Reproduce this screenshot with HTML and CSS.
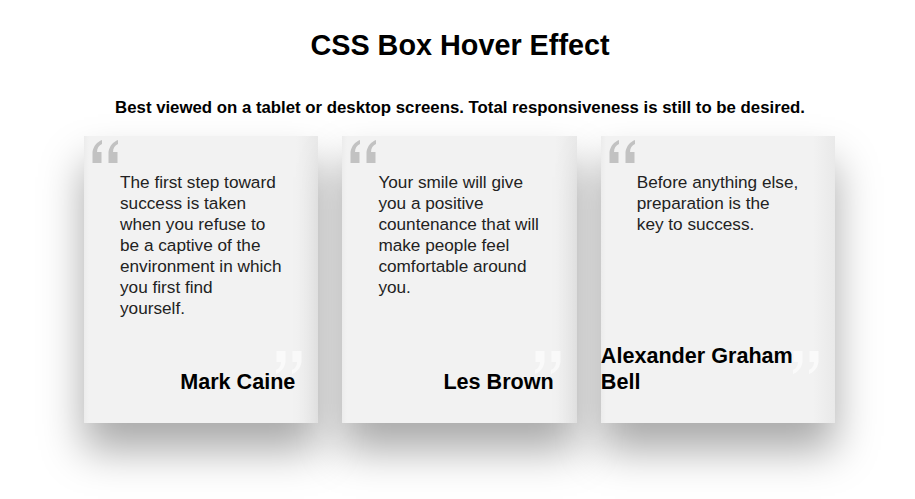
FILE: index.html
```html
<!DOCTYPE html>
<html lang="en">
<head>
<meta charset="utf-8">
<title>CSS Box Hover Effect</title>
<link rel="stylesheet" href="styles.css">
</head>
<body>
  <header class="page-head">
    <h1 class="title">CSS Box Hover Effect</h1>
    <p class="subtitle">Best viewed on a tablet or desktop screens. Total responsiveness is still to be desired.</p>
  </header>

  <main class="cards">
    <article class="card">
      <svg class="mark mark-open" viewBox="0 0 27 24" aria-hidden="true">
        <path d="M10 0 C5 2 1.5 6 0.5 12 L0.5 23 L9.5 23 L9.5 12 L5 12 C5 8 7 5.5 10 4 Z"/>
        <path d="M26 0 C21 2 17.5 6 16.5 12 L16.5 23 L25.5 23 L25.5 12 L21 12 C21 8 23 5.5 26 4 Z"/>
      </svg>
      <p class="quote">The first step toward success is taken when you refuse to be a captive of the environment in which you first find yourself.</p>
      <h2 class="author">Mark Caine</h2>
      <svg class="mark mark-close" viewBox="0 0 27 24" aria-hidden="true">
        <path d="M1 24 C6 22 9.5 18 10.5 12 L10.5 1 L1.5 1 L1.5 12 L6 12 C6 16 4 18.5 1 20 Z"/>
        <path d="M17 24 C22 22 25.5 18 26.5 12 L26.5 1 L17.5 1 L17.5 12 L22 12 C22 16 20 18.5 17 20 Z"/>
      </svg>
    </article>

    <article class="card">
      <svg class="mark mark-open" viewBox="0 0 27 24" aria-hidden="true">
        <path d="M10 0 C5 2 1.5 6 0.5 12 L0.5 23 L9.5 23 L9.5 12 L5 12 C5 8 7 5.5 10 4 Z"/>
        <path d="M26 0 C21 2 17.5 6 16.5 12 L16.5 23 L25.5 23 L25.5 12 L21 12 C21 8 23 5.5 26 4 Z"/>
      </svg>
      <p class="quote">Your smile will give you a positive countenance that will make people feel comfortable around you.</p>
      <h2 class="author">Les Brown</h2>
      <svg class="mark mark-close" viewBox="0 0 27 24" aria-hidden="true">
        <path d="M1 24 C6 22 9.5 18 10.5 12 L10.5 1 L1.5 1 L1.5 12 L6 12 C6 16 4 18.5 1 20 Z"/>
        <path d="M17 24 C22 22 25.5 18 26.5 12 L26.5 1 L17.5 1 L17.5 12 L22 12 C22 16 20 18.5 17 20 Z"/>
      </svg>
    </article>

    <article class="card">
      <svg class="mark mark-open" viewBox="0 0 27 24" aria-hidden="true">
        <path d="M10 0 C5 2 1.5 6 0.5 12 L0.5 23 L9.5 23 L9.5 12 L5 12 C5 8 7 5.5 10 4 Z"/>
        <path d="M26 0 C21 2 17.5 6 16.5 12 L16.5 23 L25.5 23 L25.5 12 L21 12 C21 8 23 5.5 26 4 Z"/>
      </svg>
      <p class="quote">Before anything else, preparation is the key to success.</p>
      <h2 class="author">Alexander Graham Bell</h2>
      <svg class="mark mark-close" viewBox="0 0 27 24" aria-hidden="true">
        <path d="M1 24 C6 22 9.5 18 10.5 12 L10.5 1 L1.5 1 L1.5 12 L6 12 C6 16 4 18.5 1 20 Z"/>
        <path d="M17 24 C22 22 25.5 18 26.5 12 L26.5 1 L17.5 1 L17.5 12 L22 12 C22 16 20 18.5 17 20 Z"/>
      </svg>
    </article>
  </main>
</body>
</html>
```

FILE: styles.css
```css
* {
  box-sizing: border-box;
}

html,
body {
  background: #ffffff;
}

body {
  margin: 0;
  min-height: 499px;
  padding: 0 0 80px 5px;
  font-family: "Liberation Sans", Arial, sans-serif;
  color: #000;
}

.page-head {
  text-align: center;
  padding-top: 29px;
}

.title {
  margin: 0;
  font-size: 28.8px;
  font-weight: 700;
  line-height: 33px;
}

.subtitle {
  margin: 36px 0 0;
  font-size: 16.8px;
  font-weight: 700;
  line-height: 19px;
}

/* three quote boxes in a row */
.cards {
  display: flex;
  gap: 24px;
  margin: 19px 0 0 79px;
}

.card {
  position: relative;
  display: flex;
  flex-direction: column;
  width: 234.4px;
  height: 287px;
  background: linear-gradient(to right, #ececec 0, #f2f2f2 5px, #f2f2f2 calc(100% - 22px), #e9e9e9 100%);
  box-shadow: 0 27px 40px rgba(0, 0, 0, 0.34);
}

.mark {
  position: absolute;
  width: 27px;
  height: 24px;
}

.mark-open {
  left: 8px;
  top: 4px;
  fill: #c2c2c2;
}

.mark-close {
  right: 16px;
  top: 214px;
  fill: #fafafa;
}

.quote {
  margin: 36px 0 0 36px;
  width: 162px;
  font-size: 17.2px;
  line-height: 21px;
  color: #222;
}

.author {
  position: relative;
  z-index: 1;
  margin: auto 23px 28px 0;
  align-self: flex-end;
  font-size: 21.6px;
  font-weight: 700;
  line-height: 26px;
  color: #000;
}
```
